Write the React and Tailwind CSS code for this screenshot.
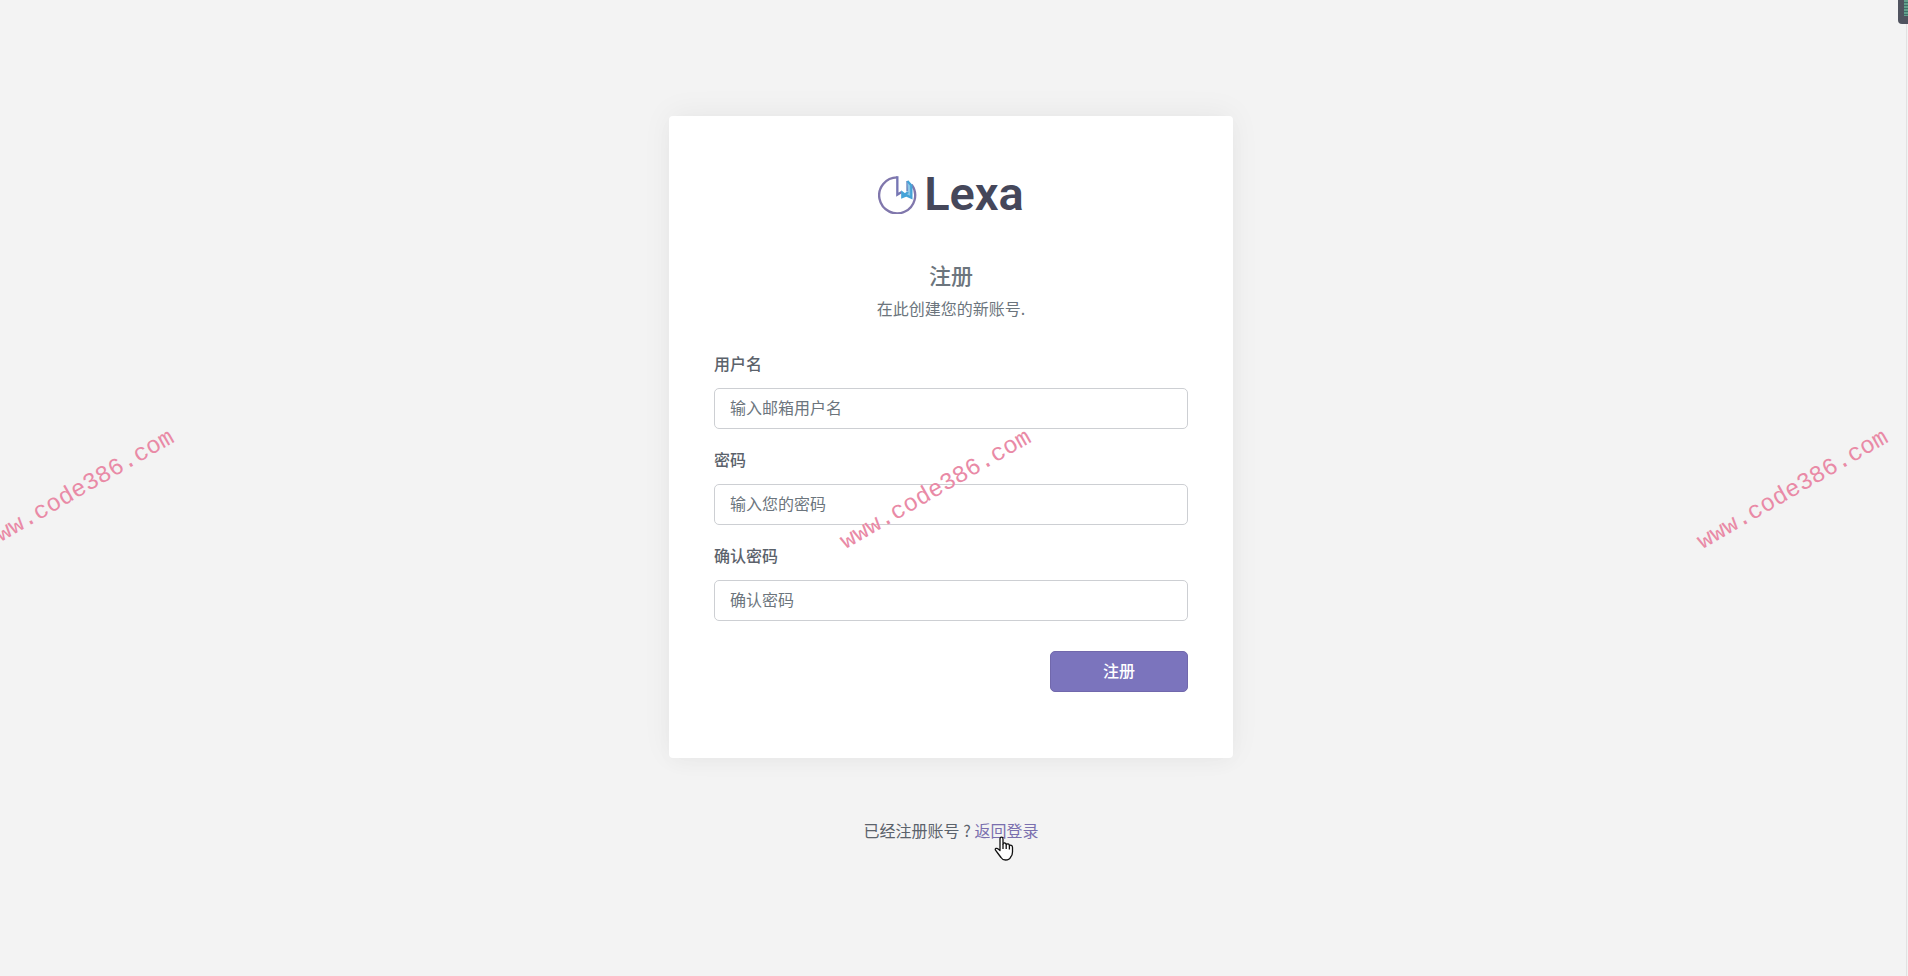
import { useId } from "react";

/**
 * Logo — Lexa mark and wordmark.
 */
function Logo() {
  return (
    <a href="#" aria-label="Lexa" className="flex h-10 items-center gap-1.5">
      <svg viewBox="6 6 120 120" className="h-10 w-10" fill="none" strokeWidth="7">
        <path d="M64 16 A54 54 0 1 0 107 38" stroke="#8077ac" />
        <path d="M64 13 V68 L77 60" stroke="#7676b4" />
        {/* Bookmark */}
        <path d="M94 27 V58" stroke="#6a84be" strokeWidth="6" />
        <path
          d="M94 27 L106 40 V77 L91 70 L79 75 V62 L87 68 L96 60"
          stroke="#45a3d8"
          fill="#8cc6e6"
        />
      </svg>
      <span className="font-['Roboto'] text-[47px] leading-10 font-semibold text-[#45475a]">
        Lexa
      </span>
    </a>
  );
}

function Field({ label, type = "text", placeholder }) {
  const id = useId();

  return (
    <div className="mb-[18px]">
      <label htmlFor={id} className="mb-[13px] block font-medium text-[#5b626b]">
        {label}
      </label>
      <input
        id={id}
        type={type}
        placeholder={placeholder}
        className="block h-[41px] w-full rounded-[5px] border border-[#cdcfd3] bg-white px-[15px] pb-1 placeholder:text-[#6c757d] focus:outline-none"
      />
    </div>
  );
}

function Watermark() {
  return (
    <div
      aria-hidden="true"
      className="pointer-events-none absolute top-[474px] right-9 left-0 flex justify-center"
    >
      {[0, 1, 2].map((i) => (
        <div key={i} className="flex w-[857px] shrink-0 justify-center">
          <span className="-rotate-30 font-['Liberation_Mono',monospace] text-2xl leading-8 text-[#e98aa6]">
            www.code386.com
          </span>
        </div>
      ))}
    </div>
  );
}

export default function App() {
  return (
    <div className="relative min-h-screen overflow-hidden bg-[#f3f3f3] pr-1.5 font-['Noto_Sans_CJK_SC',sans-serif] text-base leading-6 text-[#5b626b]">
      <main className="mx-auto w-full max-w-[564px] pt-[116px]">
        <div className="rounded bg-white px-[45px] pt-[58px] pb-[66px] shadow-[0_-3px_31px_0_rgba(0,0,0,0.05),0_6px_20px_0_rgba(0,0,0,0.02)]">
          <div className="flex justify-center">
            <Logo />
          </div>

          <h1 className="mt-[46px] text-center text-[22px] leading-7 font-medium text-[#6c757d]">
            注册
          </h1>
          <p className="mt-2 text-center text-[#6c757d]">在此创建您的新账号.</p>

          <form className="mt-[31px]" onSubmit={(e) => e.preventDefault()}>
            <Field label="用户名" placeholder="输入邮箱用户名" />
            <Field label="密码" type="password" placeholder="输入您的密码" />
            <Field label="确认密码" type="password" placeholder="确认密码" />
            <div className="mt-[30px] flex justify-end">
              <button
                type="submit"
                className="h-[41px] w-[138px] rounded-[5px] border border-[#7168ac] bg-[#7b74bd] pb-1 font-medium text-white"
              >
                注册
              </button>
            </div>
          </form>
        </div>

        <p className="mt-[60px] text-center">
          已经注册账号 ?{" "}
          <a href="#" className="relative text-[#7a6fae]">
            返回登录
            {/* Pointer */}
            <svg
              viewBox="0 0 20 26"
              className="absolute top-[18px] left-5 h-[26px] w-5"
              fill="white"
              stroke="#111"
              strokeWidth="1.3"
              strokeLinejoin="round"
            >
              <path d="M6 14.5 V3 Q6 1.2 7.5 1.2 Q9 1.2 9 3 V8 Q9.2 6.8 10.7 7 Q12.2 7.2 12.2 8.6 Q13 7.6 14.2 7.9 Q15.4 8.2 15.4 9.7 Q16.4 8.9 17.4 9.4 Q18.5 9.9 18.5 11.5 V16 Q18.5 19 16.7 21 Q15.5 24 11.5 24 Q8.5 24 7 21.5 L4 17.5 L1.5 14.2 Q.8 13 2 12.4 Q3.3 12 4.5 13.2 Z" />
              <path d="M9 8 V13 M12.2 8.6 V13 M15.4 9.7 V13.5" />
            </svg>
          </a>
        </p>
      </main>

      <Watermark />

      {/* Docked widget */}
      <div className="absolute top-0 right-0 h-6 w-2.5 rounded-bl bg-[#50535f] pl-1.5">
        <div className="h-4 bg-[repeating-linear-gradient(#62a08c_0_2px,#3f6f68_2px_3px)]" />
      </div>
      <div className="absolute top-6 right-0 bottom-0 w-0.5 border-l border-[#e2e2e2]" />
    </div>
  );
}
